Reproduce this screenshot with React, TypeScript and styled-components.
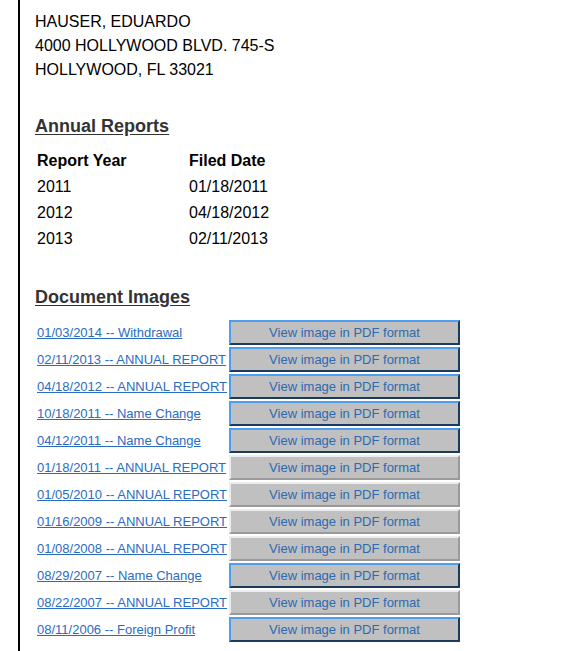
import React from 'react';
import styled, { createGlobalStyle } from 'styled-components';

const GlobalStyle = createGlobalStyle`
  html, body {
    margin: 0;
    padding: 0;
    background: #fff;
  }
  body {
    font-family: 'Liberation Sans', Arial, Helvetica, sans-serif;
    color: #000;
  }
`;

const Page = styled.div`
  margin-left: 18px;
  border-left: 2px solid #000;
  padding: 10px 0 9px 15px;
  min-height: 632px;
`;

const Address = styled.div`
  font-size: 16px;
  line-height: 24px;
`;

const SectionTitle = styled.h2<{ top: number }>`
  margin: ${({ top }) => top}px 0 0;
  font-size: 18px;
  line-height: 22px;
  font-weight: bold;
  color: #333;
  text-decoration: underline;
  text-underline-offset: 2px;
`;

const ReportTable = styled.div`
  display: grid;
  grid-template-columns: 152px auto;
  margin-top: 11px;
  padding-left: 2px;
  font-size: 16px;
  line-height: 26px;
`;

const HeadCell = styled.div`
  font-weight: bold;
`;

const DocList = styled.div`
  display: flex;
  flex-direction: column;
  gap: 2px;
  margin-top: 12px;
`;

const DocRow = styled.div`
  display: grid;
  grid-template-columns: 192px 231px;
  align-items: center;
  padding-left: 2px;
`;

const DocLink = styled.a`
  font-size: 13px;
  line-height: 16px;
  color: #2a6cbf;
  text-decoration: underline;
  white-space: nowrap;
  cursor: pointer;
`;

const PdfButton = styled.button<{ focused: boolean }>`
  height: 25px;
  width: 231px;
  padding: 0;
  font-family: 'Liberation Sans', Arial, Helvetica, sans-serif;
  font-size: 13px;
  color: #2e6ab0;
  background: #c0c0c0;
  border: 2px solid;
  border-color: ${({ focused }) =>
    focused ? '#4c9ef0 #1b3a5e #1b3a5e #4c9ef0' : '#ececec #9a9a9a #9a9a9a #ececec'};
  cursor: pointer;
`;

const reports = [
  ['2011', '01/18/2011'],
  ['2012', '04/18/2012'],
  ['2013', '02/11/2013'],
];

const documents: [string, boolean][] = [
  ['01/03/2014 -- Withdrawal', true],
  ['02/11/2013 -- ANNUAL REPORT', true],
  ['04/18/2012 -- ANNUAL REPORT', true],
  ['10/18/2011 -- Name Change', true],
  ['04/12/2011 -- Name Change', true],
  ['01/18/2011 -- ANNUAL REPORT', false],
  ['01/05/2010 -- ANNUAL REPORT', false],
  ['01/16/2009 -- ANNUAL REPORT', false],
  ['01/08/2008 -- ANNUAL REPORT', false],
  ['08/29/2007 -- Name Change', true],
  ['08/22/2007 -- ANNUAL REPORT', false],
  ['08/11/2006 -- Foreign Profit', true],
];

export default function App() {
  return (
    <>
      <GlobalStyle />
      <Page>
        <Address>
          <div>HAUSER, EDUARDO</div>
          <div>4000 HOLLYWOOD BLVD. 745-S</div>
          <div>HOLLYWOOD, FL 33021</div>
        </Address>

        <SectionTitle top={33}>Annual Reports</SectionTitle>
        <ReportTable>
          <HeadCell>Report Year</HeadCell>
          <HeadCell>Filed Date</HeadCell>
          {reports.map(([year, date]) => (
            <React.Fragment key={year}>
              <div>{year}</div>
              <div>{date}</div>
            </React.Fragment>
          ))}
        </ReportTable>

        <SectionTitle top={34}>Document Images</SectionTitle>
        <DocList>
          {documents.map(([label, focused]) => (
            <DocRow key={label}>
              <DocLink>{label}</DocLink>
              <PdfButton focused={focused}>View image in PDF format</PdfButton>
            </DocRow>
          ))}
        </DocList>
      </Page>
    </>
  );
}
